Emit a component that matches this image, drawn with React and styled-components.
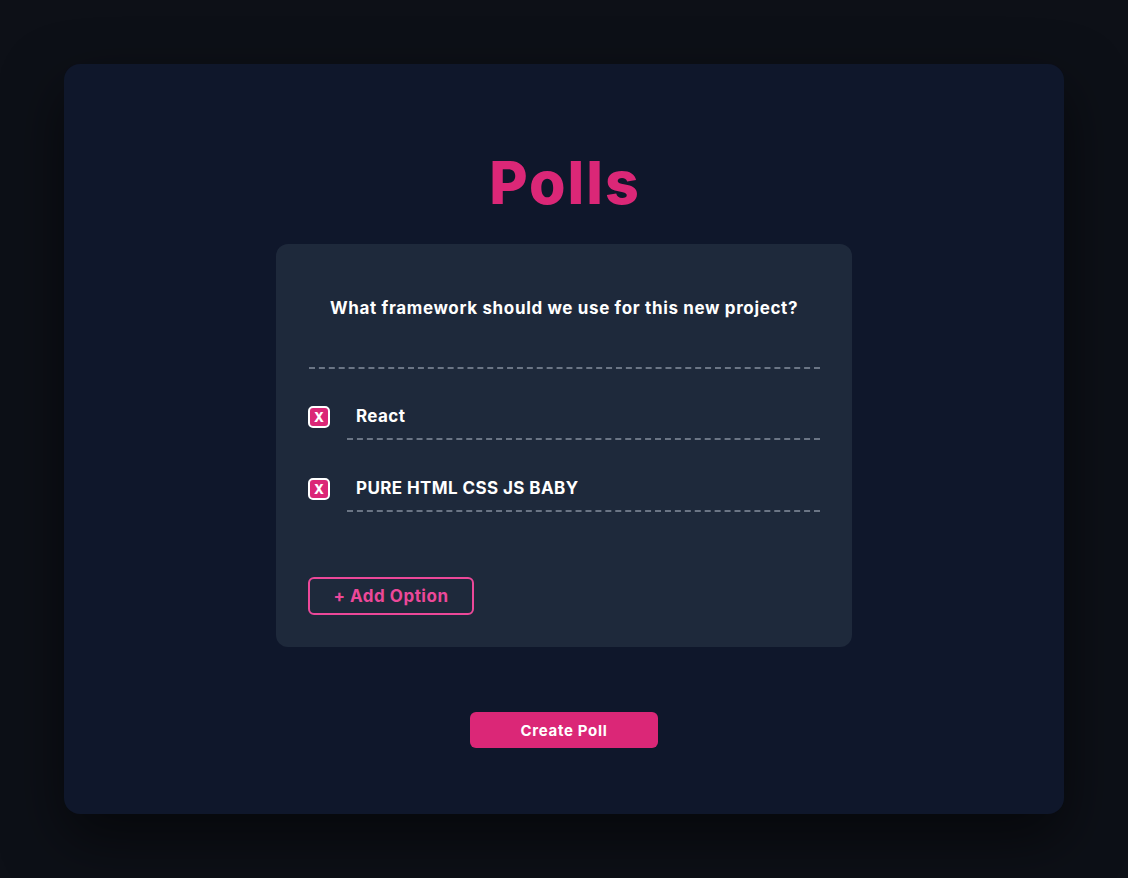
import React from "react";
import styled, { createGlobalStyle } from "styled-components";

const Global = createGlobalStyle`
  html, body { margin: 0; padding: 0; background: #0d1017; }
  body { font-family: Inter, "Noto Sans", sans-serif; }
  * { box-sizing: border-box; }
`;

const Page = styled.div`
  width: 1128px;
  height: 878px;
  padding-top: 64px;
  display: flex;
  justify-content: center;
  align-items: flex-start;
  background: #0d1017;
`;

const Shell = styled.div`
  width: 1000px;
  height: 750px;
  background: #0f172b;
  border-radius: 16px;
  box-shadow: 0 24px 60px rgba(0, 0, 0, 0.55);
  display: flex;
  flex-direction: column;
  align-items: center;
  padding-top: 83px;
`;

const Title = styled.h1`
  margin: 0 -2px 0 0;
  font-size: 59px;
  line-height: 72px;
  font-weight: 800;
  color: #db2777;
  letter-spacing: 2px;
`;

const Card = styled.div`
  margin-top: 25px;
  width: 576px;
  background: #1e293b;
  border-radius: 12px;
  padding: 52px 32px 32px;
  display: flex;
  flex-direction: column;
`;

const Question = styled.div`
  text-align: center;
  color: #fff;
  font-size: 17px;
  line-height: 24px;
  font-weight: 700;
  letter-spacing: 0.65px;
`;

const Divider = styled.div`
  margin: 47px 0 0 1px;
  border-top: 2px dashed #6b7585;
`;

const Options = styled.div`
  margin-top: 25px;
  display: flex;
  flex-direction: column;
  gap: 26px;
`;

const Row = styled.div`
  display: flex;
  align-items: center;
  gap: 17px;
`;

const Remove = styled.button`
  width: 22px;
  height: 22px;
  flex: none;
  padding: 0;
  border: 2px solid #fff;
  border-radius: 5px;
  background: #db2777;
  color: #fff;
  font-family: Inter, sans-serif;
  font-size: 13px;
  font-weight: 800;
  line-height: 18px;
  text-align: center;
`;

const OptionText = styled.div`
  flex: 1;
  height: 46px;
  padding-left: 9px;
  display: flex;
  align-items: center;
  border-bottom: 2px dashed #6b7585;
  color: #fff;
  font-size: 17px;
  font-weight: 700;
  letter-spacing: 0.4px;
`;

const AddButton = styled.button`
  margin-top: 65px;
  align-self: flex-start;
  width: 166px;
  height: 38px;
  border: 2px solid #ec4899;
  border-radius: 6px;
  background: transparent;
  color: #ec4899;
  font-family: Inter, sans-serif;
  font-size: 17px;
  font-weight: 700;
  letter-spacing: 0.5px;
`;

const CreateButton = styled.button`
  margin-top: 65px;
  width: 188px;
  height: 36px;
  border: none;
  border-radius: 6px;
  background: #db2777;
  color: #fff;
  font-family: Inter, sans-serif;
  font-size: 15px;
  font-weight: 700;
  letter-spacing: 0.7px;
`;

const options = ["React", "PURE HTML CSS JS BABY"];

export default function App() {
  return (
    <>
      <Global />
      <Page>
        <Shell>
          <Title>Polls</Title>
          <Card>
            <Question>What framework should we use for this new project?</Question>
            <Divider />
            <Options>
              {options.map((o) => (
                <Row key={o}>
                  <Remove>X</Remove>
                  <OptionText>{o}</OptionText>
                </Row>
              ))}
            </Options>
            <AddButton>+ Add Option</AddButton>
          </Card>
          <CreateButton>Create Poll</CreateButton>
        </Shell>
      </Page>
    </>
  );
}
